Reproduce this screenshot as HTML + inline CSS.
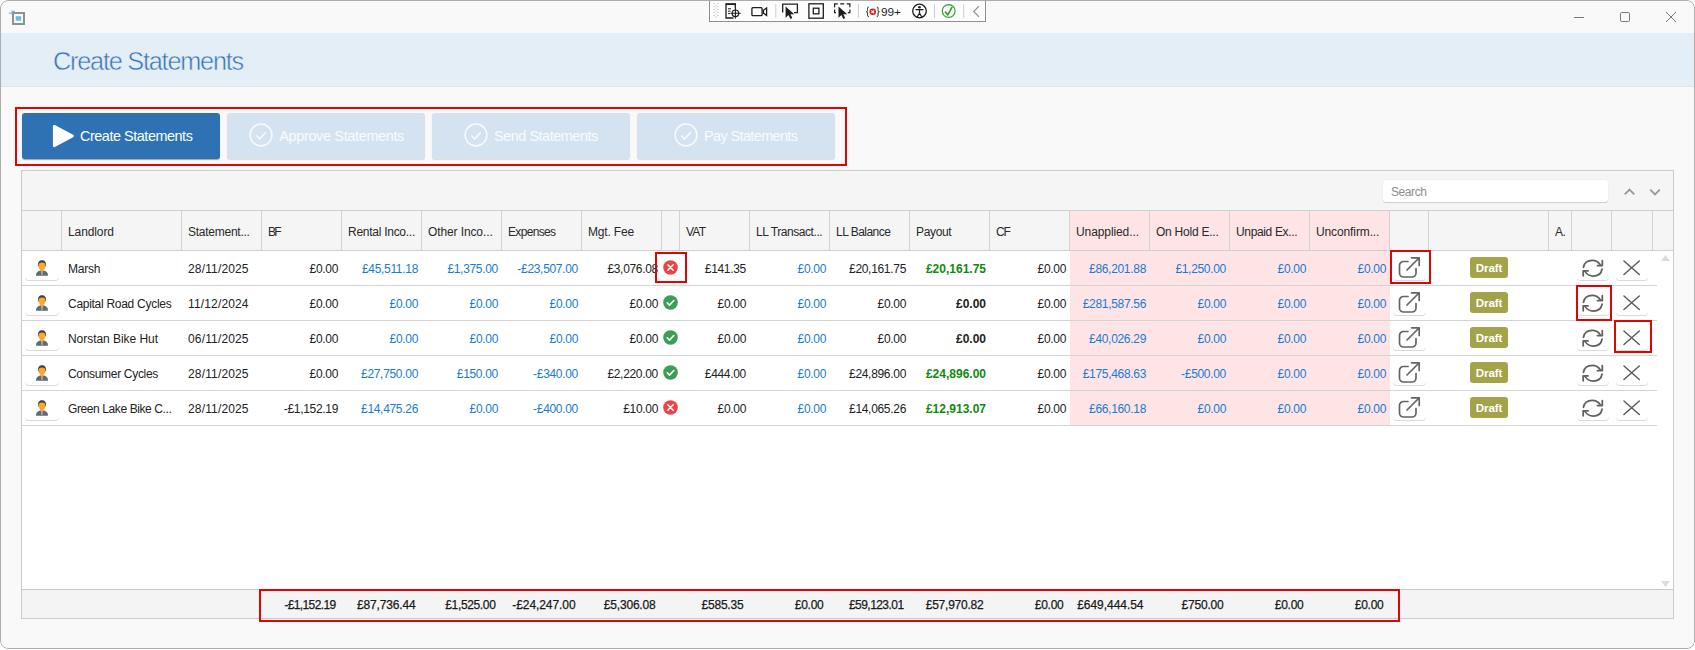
<!DOCTYPE html>
<html lang="en"><head><meta charset="utf-8"><title>Create Statements</title>
<style>
*{box-sizing:border-box;margin:0;padding:0}
html,body{width:1695px;height:650px;overflow:hidden;background:#fff}
body{font-family:"Liberation Sans",sans-serif;font-size:12px;color:#222;position:relative}
.a,svg{position:absolute}
svg{overflow:visible}
.win{position:absolute;left:0;top:0;width:1695px;height:649px;background:#f9f9f9;border-radius:8px;overflow:hidden}
.winb{left:0;top:0;width:1695px;height:649px;border:1px solid #adadad;border-radius:8px}
.band{left:0;top:33px;width:1695px;height:54px;background:#e4eef7;border-bottom:1px solid #dfe4e9}
.title{left:53px;top:45px;font-size:25.300px;line-height:32px;color:#3876b5;white-space:nowrap;-webkit-text-stroke:0.500px #e4eef7}
.btn{position:absolute;top:113px;height:46px;width:198px;border-radius:3px;background:#d5e3f0;box-shadow:0 1px 1px rgba(0,0,0,.12);color:#f8fbfe;font-size:14.400px;line-height:46px;white-space:nowrap}
.btn.on{background:#2e72b4;color:#fff;box-shadow:0 1px 1px rgba(0,0,0,.35)}
.btn span{position:absolute;top:0}
.red{position:absolute;border:2px solid #e00505}
.grid{position:absolute;left:21px;top:170px;width:1653px;height:449px;border:1px solid #cbcbcb;background:#fff}
.gtop{left:0;top:0;width:1651px;height:39px;background:#f5f5f5}
.ghead{left:0;top:39px;width:1651px;height:41px;background:#f5f5f5;border-top:1px solid #cfcfcf;border-bottom:1px solid #cfcfcf}
.gfoot{left:0;top:418px;width:1651px;height:29px;background:#f4f4f4;border-top:1px solid #c9c9c9}
.vs{position:absolute;top:0;width:1px;height:39px;background:#d2d2d2}
.ht{position:absolute;top:0;height:39px;line-height:43px;white-space:nowrap;color:#2a2a2a}
.row{position:absolute;left:0;width:1635px;height:35px;border-bottom:1px solid #d4d4d4}
.c{position:absolute;top:0;height:34px;line-height:37px;white-space:nowrap;overflow:hidden}
.r{text-align:right;letter-spacing:-0.310px}
.b{color:#177bd1}
.pk{background:#ffe4e6}
.pay{font-weight:bold;letter-spacing:0}
.g{color:#0f8a0f}
.ib{position:absolute;background:#fff;border-radius:4px;box-shadow:0 1px 0 #dadada}
.badge{position:absolute;width:38px;height:21px;border-radius:3px;background:#a3a34a;color:#fff;font-weight:bold;font-size:11.600px;line-height:21px;text-align:center;letter-spacing:-0.150px}
.ft{position:absolute;top:0;height:28px;line-height:31px;text-align:right;white-space:nowrap;color:#1a1a1a;-webkit-text-stroke:0.250px #1a1a1a}
</style></head><body>
<div class="win">

<svg style="left:10px;top:10px" width="16" height="16" viewBox="0 0 16 16"><rect x="1.400" y="0.700" width="3.400" height="4.100" fill="#5ec3e8"/><rect x="3" y="3" width="11" height="11" fill="#f9f9f9" stroke="#909090" stroke-width="2"/><rect x="5.700" y="6.200" width="5.500" height="4.500" fill="#5ec3e8"/><rect x="-0.800" y="2.500" width="1.500" height="1.300" fill="#909090"/></svg>
<svg style="left:1560px;top:0" width="133" height="33" viewBox="0 0 133 33" fill="none" stroke="#7a7a7a" stroke-width="1"><path d="M14 17.500h10"/><rect x="60.500" y="12.500" width="9" height="9" rx="1.200"/><path d="M106 12l10 10M116 12l-10 10"/></svg>
<div class="a" style="left:709px;top:-1px;width:277px;height:23px;background:#fdfdfd;border:1px solid #8f8f8f;"></div>
<svg style="left:700px;top:0" width="300" height="24" viewBox="0 0 300 24" fill="none" stroke="#1e1e1e" stroke-width="1.300">
<g fill="#b4b4b4" stroke="none"><path d="M13.500 3h1v1h-1zM15.500 4.500h1v1h-1zM13.500 6h1v1h-1zM15.500 7.500h1v1h-1zM13.500 9h1v1h-1zM15.500 10.500h1v1h-1zM13.500 12h1v1h-1zM15.500 13.500h1v1h-1zM13.500 15h1v1h-1zM15.500 16.500h1v1h-1zM17.500 3h1v1h-1zM17.500 6h1v1h-1zM17.500 9h1v1h-1zM17.500 12h1v1h-1zM17.500 15h1v1h-1z"/></g>
<g><path d="M25.300 4.100h10.700" stroke-width="1.900"/><path d="M26 5v13h7.500M35.300 5v3"/><path d="M28 8.800h3M28 11.200h2.500M28 13.600h2" stroke-width="1"/><circle cx="35.400" cy="13.300" r="3.300" stroke-width="1.200"/><path d="M35.400 8v10.600M30.400 13.300h10.300" stroke-width="1.100"/></g>
<g><rect x="51.900" y="7.700" width="10.200" height="8" rx="1"/><path d="M63.400 10.300l3.200-2.300v7.400l-3.200-2.300z"/></g>
<path d="M75.800 4.400v13.300M158.400 4.400v13.300M234.500 4.400v13.300M263.700 4.400v13.300" stroke="#c5cbd6" stroke-width="1"/>
<g><path d="M82.700 12.600v-8.500h14.700v8.500h-3.400"/><path d="M85.600 6.600v11.200l2.900-2.700 1.900 3.900 1.900-0.900-1.900-3.800h3.900z" fill="#1e1e1e" stroke="none"/></g>
<g><rect x="108.900" y="3.800" width="14.400" height="14.400"/><rect x="113.300" y="8.200" width="5.600" height="5.600"/></g>
<g><path d="M134.600 7.200v-3.300h3.200M140.200 3.900h4M146.700 3.900h3.200v3.300M149.900 9.500v3.200h-2M134.600 9.500v3.200h1.400" stroke-width="1.200"/><path d="M138.500 6.600v11.200l2.900-2.700 1.900 3.900 1.900-0.900-1.900-3.800h3.900z" fill="#1e1e1e" stroke="none"/></g>
<g stroke-width="1"><path d="M168.800 7c-1.300 0-1.300 0.900-1.300 2.400s0 2.400-1.200 2.400c1.200 0 1.200 0.900 1.200 2.400s0 2.400 1.300 2.400M176.800 7c1.300 0 1.300 0.900 1.300 2.400s0 2.400 1.200 2.400c-1.200 0-1.200 0.900-1.200 2.400s0 2.400-1.300 2.400"/><circle cx="172.700" cy="11.800" r="3.300" fill="#e01b1b" stroke="none"/><path d="M171.400 10.500l2.600 2.600M174 10.500l-2.600 2.600" stroke="#fff" stroke-width="1.100"/></g>
<g><circle cx="219.500" cy="11" r="6.800"/><circle cx="219.500" cy="7.200" r="1.300" fill="#1e1e1e" stroke="none"/><path d="M215.500 9.700h8M219.500 9.700v3.500M219.500 13l-2.300 4M219.500 13l2.300 4" stroke-width="1.200"/></g>
<g stroke="#2ca02c"><circle cx="248.700" cy="11" r="6.400" stroke-width="1.100"/><path d="M245 11.500l2.800 3.300 4.400-8" stroke-width="1.600"/></g>
<path d="M279 6.200l-5.300 5.300 5.300 5.300" stroke="#8e8e8e" stroke-width="1.200"/>
</svg>
<div class="a" style="left:881px;top:3px;font-size:11.800px;line-height:18px;color:#1e1e1e;white-space:nowrap"><span style="letter-spacing:-0.072px">99+</span></div>
<div class="a band"></div><div class="a title"><span style="letter-spacing:-1.231px">Create Statements</span></div>
<div class="red" style="left:15px;top:107px;width:832px;height:59px"></div>
<div class="btn on" style="left:22px"><svg style="left:30px;top:11px" width="23" height="24" viewBox="0 0 23 24"><path d="M2.200 2.200L20.500 12 2.200 21.800z" fill="#fff" stroke="#fff" stroke-width="2.600" stroke-linejoin="round"/></svg><span style="left:58px"><span style="letter-spacing:-0.446px">Create Statements</span></span></div>
<div class="btn" style="left:227px"><svg style="left:20.7px;top:9px" width="26" height="26" viewBox="0 0 26 26" fill="none" stroke="#f8fbfe" stroke-width="1.500"><circle cx="13" cy="13" r="10.900"/><path d="M8.300 13.500l3.300 3.300 6.200-6.600"/></svg><span style="left:52.3px"><span style="letter-spacing:-0.316px">Approve Statements</span></span></div>
<div class="btn" style="left:432px"><svg style="left:30.7px;top:9px" width="26" height="26" viewBox="0 0 26 26" fill="none" stroke="#f8fbfe" stroke-width="1.500"><circle cx="13" cy="13" r="10.900"/><path d="M8.300 13.500l3.300 3.300 6.200-6.600"/></svg><span style="left:62.0px"><span style="letter-spacing:-0.440px">Send Statements</span></span></div>
<div class="btn" style="left:637px"><svg style="left:35.9px;top:9px" width="26" height="26" viewBox="0 0 26 26" fill="none" stroke="#f8fbfe" stroke-width="1.500"><circle cx="13" cy="13" r="10.900"/><path d="M8.300 13.500l3.300 3.300 6.200-6.600"/></svg><span style="left:67.0px"><span style="letter-spacing:-0.585px">Pay Statements</span></span></div>
<div class="grid"><div class="a gtop">
<div class="a" style="left:1361px;top:9px;width:225px;height:22px;background:#fff;border-radius:3px;box-shadow:0 1px 0 #cdcdcd, 0 0 0 0.500px #ececec"></div><div class="a" style="left:1369px;top:9px;line-height:25px;color:#8e8e8e;font-size:12px;white-space:nowrap"><span style="letter-spacing:-0.422px">Search</span></div>
<svg style="left:1600px;top:15px" width="44" height="12" viewBox="0 0 44 12" fill="none" stroke="#9a9a9a" stroke-width="1.900"><path d="M2.700 8.300l4.800-4.800 4.800 4.800M28.200 3.700l4.800 4.800 4.800-4.800"/></svg>
</div><div class="a ghead">
<div class="vs" style="left:39px"></div>
<div class="vs" style="left:159px"></div>
<div class="ht" style="left:46px"><span style="letter-spacing:-0.102px">Landlord</span></div>
<div class="vs" style="left:239px"></div>
<div class="ht" style="left:166px"><span style="letter-spacing:-0.250px">Statement...</span></div>
<div class="vs" style="left:319px"></div>
<div class="ht" style="left:246px"><span style="letter-spacing:-1.672px">BF</span></div>
<div class="vs" style="left:399px"></div>
<div class="ht" style="left:326px"><span style="letter-spacing:-0.266px">Rental Inco...</span></div>
<div class="vs" style="left:479px"></div>
<div class="ht" style="left:406px"><span style="letter-spacing:-0.110px">Other Inco...</span></div>
<div class="vs" style="left:559px"></div>
<div class="ht" style="left:486px"><span style="letter-spacing:-0.663px">Expenses</span></div>
<div class="vs" style="left:639px"></div>
<div class="ht" style="left:566px"><span style="letter-spacing:-0.182px">Mgt. Fee</span></div>
<div class="vs" style="left:657px"></div>
<div class="vs" style="left:727px"></div>
<div class="ht" style="left:664px"><span style="letter-spacing:-0.754px">VAT</span></div>
<div class="vs" style="left:807px"></div>
<div class="ht" style="left:734px"><span style="letter-spacing:-0.433px">LL Transact...</span></div>
<div class="vs" style="left:887px"></div>
<div class="ht" style="left:814px"><span style="letter-spacing:-0.521px">LL Balance</span></div>
<div class="vs" style="left:967px"></div>
<div class="ht" style="left:894px"><span style="letter-spacing:-0.343px">Payout</span></div>
<div class="vs" style="left:1047px"></div>
<div class="ht" style="left:974px"><span style="letter-spacing:-1.100px">CF</span></div>
<div class="a pk" style="left:1048px;top:0;width:79px;height:39px"></div>
<div class="vs" style="left:1127px"></div>
<div class="ht" style="left:1054px"><span style="letter-spacing:-0.096px">Unapplied...</span></div>
<div class="a pk" style="left:1128px;top:0;width:79px;height:39px"></div>
<div class="vs" style="left:1207px"></div>
<div class="ht" style="left:1134px"><span style="letter-spacing:-0.240px">On Hold E...</span></div>
<div class="a pk" style="left:1208px;top:0;width:79px;height:39px"></div>
<div class="vs" style="left:1287px"></div>
<div class="ht" style="left:1214px"><span style="letter-spacing:-0.348px">Unpaid Ex...</span></div>
<div class="a pk" style="left:1288px;top:0;width:79px;height:39px"></div>
<div class="vs" style="left:1367px"></div>
<div class="ht" style="left:1294px"><span style="letter-spacing:-0.116px">Unconfirm...</span></div>
<div class="vs" style="left:1406px"></div>
<div class="vs" style="left:1526px"></div>
<div class="vs" style="left:1549px"></div>
<div class="ht" style="left:1533px"><span style="letter-spacing:-0.472px">A.</span></div>
<div class="vs" style="left:1589px"></div>
<div class="vs" style="left:1630px"></div>
</div>
<div class="row" style="top:80px">
<div class="ib" style="left:3px;top:3px;width:34px;height:26px"></div>
<svg style="left:14px;top:9px" width="13" height="16" viewBox="0 0 13 16"><path d="M0 15.700c0-3 1.500-4.500 4-5.100h4c2.500 0.600 4 2.100 4 5.100z" fill="#546e7a"/><path d="M4.900 10.700h2.200l-0.400 4.300h-1.400z" fill="#ef8a8a"/><path d="M2 6.300c-0.500-4.200 1.500-6.100 4-6.100s4.500 1.900 4 6.100z" fill="#37434b"/><path d="M2.500 5.200c0-1.600 1.200-2.600 3.500-2.600s3.500 1 3.500 2.600c0 1.800-0.700 3.400-1.700 4.300l-0.400 1.600h-2.800l-0.400-1.600c-1-0.900-1.700-2.500-1.700-4.300z" fill="#ffa726"/></svg>
<div class="c" style="left:40px;width:119px;padding-left:6px;"><span style="letter-spacing:-0.209px">Marsh</span></div>
<div class="c" style="left:160px;width:79px;padding-left:6px;"><span style="letter-spacing:0.153px">28/11/2025</span></div>
<div class="c r" style="left:240px;width:79px;padding-right:3px;">£0.00</div>
<div class="c r b" style="left:320px;width:79px;padding-right:3px;">£45,511.18</div>
<div class="c r b" style="left:400px;width:79px;padding-right:3px;">£1,375.00</div>
<div class="c r b" style="left:480px;width:79px;padding-right:3px;">-£23,507.00</div>
<div class="c r" style="left:560px;width:79px;padding-right:3px;">£3,076.08</div>
<svg style="left:641px;top:8.800px" width="15" height="15" viewBox="0 0 15 15"><circle cx="7.500" cy="7.500" r="7.300" fill="#e84548"/><path d="M4.800 4.800l5.400 5.400M10.200 4.800l-5.400 5.400" stroke="#fff" stroke-width="1.500" stroke-linecap="round"/></svg>
<div class="c r" style="left:658px;width:69px;padding-right:3px;">£141.35</div>
<div class="c r b" style="left:728px;width:79px;padding-right:3px;">£0.00</div>
<div class="c r" style="left:808px;width:79px;padding-right:3px;">£20,161.75</div>
<div class="c r pay g" style="left:888px;width:79px;padding-right:3px;">£20,161.75</div>
<div class="c r" style="left:968px;width:79px;padding-right:3px;">£0.00</div>
<div class="c pk r b" style="left:1048px;width:80px;padding-right:4px;">£86,201.88</div>
<div class="c pk r b" style="left:1127px;width:81px;padding-right:4px;">£1,250.00</div>
<div class="c pk r b" style="left:1207px;width:81px;padding-right:4px;">£0.00</div>
<div class="c pk r b" style="left:1287px;width:81px;padding-right:4px;">£0.00</div>
<div class="ib" style="left:1371px;top:3px;width:33px;height:26px"></div>
<svg style="left:1375px;top:5.300px" width="25" height="23" viewBox="0 0 25 23" fill="none" stroke="#646464" stroke-width="1.700" stroke-linecap="round" stroke-linejoin="round"><path d="M11 5.500H6.500a4 4 0 0 0-4 4V17a4 4 0 0 0 4 4H15a4 4 0 0 0 4-4v-4.500"/><path d="M10 14L22 2M14.500 1.800H22.200V9.500"/></svg>
<div class="badge" style="left:1448px;top:6px">Draft</div>
<div class="ib" style="left:1555px;top:3px;width:32px;height:26px"></div>
<svg style="left:1559px;top:6.500px" width="23.500" height="20.500" viewBox="0 0 24 21" fill="none" stroke="#606060" stroke-width="1.800" stroke-linecap="round" stroke-linejoin="round"><path d="M2.500 9.500c0.800-4.500 4.500-7 9-7 3.500 0 6.500 1.800 8.500 4.800"/><path d="M21.800 2.800v5h-5"/><path d="M21.500 11.500c-0.800 4.500-4.500 7-9 7-3.500 0-6.500-1.800-8.500-4.800"/><path d="M2.200 18.200v-5h5"/></svg>
<div class="ib" style="left:1594px;top:3px;width:32px;height:26px"></div>
<svg style="left:1601px;top:8.700px" width="17.300" height="15.400" viewBox="0 0 18 16" fill="none" stroke="#5a5a5a" stroke-width="1.500" stroke-linecap="round"><path d="M1 1l16 14M17 1L1 15"/></svg>
</div>
<div class="row" style="top:115px">
<div class="ib" style="left:3px;top:3px;width:34px;height:26px"></div>
<svg style="left:14px;top:9px" width="13" height="16" viewBox="0 0 13 16"><path d="M0 15.700c0-3 1.500-4.500 4-5.100h4c2.500 0.600 4 2.100 4 5.100z" fill="#546e7a"/><path d="M4.900 10.700h2.200l-0.400 4.300h-1.400z" fill="#ef8a8a"/><path d="M2 6.300c-0.500-4.200 1.500-6.100 4-6.100s4.500 1.900 4 6.100z" fill="#37434b"/><path d="M2.500 5.200c0-1.600 1.200-2.600 3.500-2.600s3.500 1 3.500 2.600c0 1.800-0.700 3.400-1.700 4.300l-0.400 1.600h-2.800l-0.400-1.600c-1-0.900-1.700-2.500-1.700-4.300z" fill="#ffa726"/></svg>
<div class="c" style="left:40px;width:119px;padding-left:6px;"><span style="letter-spacing:-0.280px">Capital Road Cycles</span></div>
<div class="c" style="left:160px;width:79px;padding-left:6px;"><span style="letter-spacing:0.153px">11/12/2024</span></div>
<div class="c r" style="left:240px;width:79px;padding-right:3px;">£0.00</div>
<div class="c r b" style="left:320px;width:79px;padding-right:3px;">£0.00</div>
<div class="c r b" style="left:400px;width:79px;padding-right:3px;">£0.00</div>
<div class="c r b" style="left:480px;width:79px;padding-right:3px;">£0.00</div>
<div class="c r" style="left:560px;width:79px;padding-right:3px;">£0.00</div>
<svg style="left:641px;top:8.800px" width="15" height="15" viewBox="0 0 15 15"><circle cx="7.500" cy="7.500" r="7.300" fill="#3d9d56"/><path d="M4.200 7.800l2.300 2.300 4.300-4.600" stroke="#fff" stroke-width="1.600" fill="none" stroke-linecap="round" stroke-linejoin="round"/></svg>
<div class="c r" style="left:658px;width:69px;padding-right:3px;">£0.00</div>
<div class="c r b" style="left:728px;width:79px;padding-right:3px;">£0.00</div>
<div class="c r" style="left:808px;width:79px;padding-right:3px;">£0.00</div>
<div class="c r pay" style="left:888px;width:79px;padding-right:3px;">£0.00</div>
<div class="c r" style="left:968px;width:79px;padding-right:3px;">£0.00</div>
<div class="c pk r b" style="left:1048px;width:80px;padding-right:4px;">£281,587.56</div>
<div class="c pk r b" style="left:1127px;width:81px;padding-right:4px;">£0.00</div>
<div class="c pk r b" style="left:1207px;width:81px;padding-right:4px;">£0.00</div>
<div class="c pk r b" style="left:1287px;width:81px;padding-right:4px;">£0.00</div>
<div class="ib" style="left:1371px;top:3px;width:33px;height:26px"></div>
<svg style="left:1375px;top:5.300px" width="25" height="23" viewBox="0 0 25 23" fill="none" stroke="#646464" stroke-width="1.700" stroke-linecap="round" stroke-linejoin="round"><path d="M11 5.500H6.500a4 4 0 0 0-4 4V17a4 4 0 0 0 4 4H15a4 4 0 0 0 4-4v-4.500"/><path d="M10 14L22 2M14.500 1.800H22.200V9.500"/></svg>
<div class="badge" style="left:1448px;top:6px">Draft</div>
<div class="ib" style="left:1555px;top:3px;width:32px;height:26px"></div>
<svg style="left:1559px;top:6.500px" width="23.500" height="20.500" viewBox="0 0 24 21" fill="none" stroke="#606060" stroke-width="1.800" stroke-linecap="round" stroke-linejoin="round"><path d="M2.500 9.500c0.800-4.500 4.500-7 9-7 3.500 0 6.500 1.800 8.500 4.800"/><path d="M21.800 2.800v5h-5"/><path d="M21.500 11.500c-0.800 4.500-4.500 7-9 7-3.500 0-6.500-1.800-8.500-4.800"/><path d="M2.200 18.200v-5h5"/></svg>
<div class="ib" style="left:1594px;top:3px;width:32px;height:26px"></div>
<svg style="left:1601px;top:8.700px" width="17.300" height="15.400" viewBox="0 0 18 16" fill="none" stroke="#5a5a5a" stroke-width="1.500" stroke-linecap="round"><path d="M1 1l16 14M17 1L1 15"/></svg>
</div>
<div class="row" style="top:150px">
<div class="ib" style="left:3px;top:3px;width:34px;height:26px"></div>
<svg style="left:14px;top:9px" width="13" height="16" viewBox="0 0 13 16"><path d="M0 15.700c0-3 1.500-4.500 4-5.100h4c2.500 0.600 4 2.100 4 5.100z" fill="#546e7a"/><path d="M4.900 10.700h2.200l-0.400 4.300h-1.400z" fill="#ef8a8a"/><path d="M2 6.300c-0.500-4.200 1.500-6.100 4-6.100s4.500 1.900 4 6.100z" fill="#37434b"/><path d="M2.500 5.200c0-1.600 1.200-2.600 3.500-2.600s3.500 1 3.500 2.600c0 1.800-0.700 3.400-1.700 4.300l-0.400 1.600h-2.800l-0.400-1.600c-1-0.900-1.700-2.500-1.700-4.300z" fill="#ffa726"/></svg>
<div class="c" style="left:40px;width:119px;padding-left:6px;"><span style="letter-spacing:-0.044px">Norstan Bike Hut</span></div>
<div class="c" style="left:160px;width:79px;padding-left:6px;"><span style="letter-spacing:0.153px">06/11/2025</span></div>
<div class="c r" style="left:240px;width:79px;padding-right:3px;">£0.00</div>
<div class="c r b" style="left:320px;width:79px;padding-right:3px;">£0.00</div>
<div class="c r b" style="left:400px;width:79px;padding-right:3px;">£0.00</div>
<div class="c r b" style="left:480px;width:79px;padding-right:3px;">£0.00</div>
<div class="c r" style="left:560px;width:79px;padding-right:3px;">£0.00</div>
<svg style="left:641px;top:8.800px" width="15" height="15" viewBox="0 0 15 15"><circle cx="7.500" cy="7.500" r="7.300" fill="#3d9d56"/><path d="M4.200 7.800l2.300 2.300 4.300-4.600" stroke="#fff" stroke-width="1.600" fill="none" stroke-linecap="round" stroke-linejoin="round"/></svg>
<div class="c r" style="left:658px;width:69px;padding-right:3px;">£0.00</div>
<div class="c r b" style="left:728px;width:79px;padding-right:3px;">£0.00</div>
<div class="c r" style="left:808px;width:79px;padding-right:3px;">£0.00</div>
<div class="c r pay" style="left:888px;width:79px;padding-right:3px;">£0.00</div>
<div class="c r" style="left:968px;width:79px;padding-right:3px;">£0.00</div>
<div class="c pk r b" style="left:1048px;width:80px;padding-right:4px;">£40,026.29</div>
<div class="c pk r b" style="left:1127px;width:81px;padding-right:4px;">£0.00</div>
<div class="c pk r b" style="left:1207px;width:81px;padding-right:4px;">£0.00</div>
<div class="c pk r b" style="left:1287px;width:81px;padding-right:4px;">£0.00</div>
<div class="ib" style="left:1371px;top:3px;width:33px;height:26px"></div>
<svg style="left:1375px;top:5.300px" width="25" height="23" viewBox="0 0 25 23" fill="none" stroke="#646464" stroke-width="1.700" stroke-linecap="round" stroke-linejoin="round"><path d="M11 5.500H6.500a4 4 0 0 0-4 4V17a4 4 0 0 0 4 4H15a4 4 0 0 0 4-4v-4.500"/><path d="M10 14L22 2M14.500 1.800H22.200V9.500"/></svg>
<div class="badge" style="left:1448px;top:6px">Draft</div>
<div class="ib" style="left:1555px;top:3px;width:32px;height:26px"></div>
<svg style="left:1559px;top:6.500px" width="23.500" height="20.500" viewBox="0 0 24 21" fill="none" stroke="#606060" stroke-width="1.800" stroke-linecap="round" stroke-linejoin="round"><path d="M2.500 9.500c0.800-4.500 4.500-7 9-7 3.500 0 6.500 1.800 8.500 4.800"/><path d="M21.800 2.800v5h-5"/><path d="M21.500 11.500c-0.800 4.500-4.500 7-9 7-3.500 0-6.500-1.800-8.500-4.800"/><path d="M2.200 18.200v-5h5"/></svg>
<div class="ib" style="left:1594px;top:3px;width:32px;height:26px"></div>
<svg style="left:1601px;top:8.700px" width="17.300" height="15.400" viewBox="0 0 18 16" fill="none" stroke="#5a5a5a" stroke-width="1.500" stroke-linecap="round"><path d="M1 1l16 14M17 1L1 15"/></svg>
</div>
<div class="row" style="top:185px">
<div class="ib" style="left:3px;top:3px;width:34px;height:26px"></div>
<svg style="left:14px;top:9px" width="13" height="16" viewBox="0 0 13 16"><path d="M0 15.700c0-3 1.500-4.500 4-5.100h4c2.500 0.600 4 2.100 4 5.100z" fill="#546e7a"/><path d="M4.900 10.700h2.200l-0.400 4.300h-1.400z" fill="#ef8a8a"/><path d="M2 6.300c-0.500-4.200 1.500-6.100 4-6.100s4.500 1.900 4 6.100z" fill="#37434b"/><path d="M2.500 5.200c0-1.600 1.200-2.600 3.500-2.600s3.500 1 3.500 2.600c0 1.800-0.700 3.400-1.700 4.300l-0.400 1.600h-2.800l-0.400-1.600c-1-0.900-1.700-2.500-1.700-4.300z" fill="#ffa726"/></svg>
<div class="c" style="left:40px;width:119px;padding-left:6px;"><span style="letter-spacing:-0.314px">Consumer Cycles</span></div>
<div class="c" style="left:160px;width:79px;padding-left:6px;"><span style="letter-spacing:0.153px">28/11/2025</span></div>
<div class="c r" style="left:240px;width:79px;padding-right:3px;">£0.00</div>
<div class="c r b" style="left:320px;width:79px;padding-right:3px;">£27,750.00</div>
<div class="c r b" style="left:400px;width:79px;padding-right:3px;">£150.00</div>
<div class="c r b" style="left:480px;width:79px;padding-right:3px;">-£340.00</div>
<div class="c r" style="left:560px;width:79px;padding-right:3px;">£2,220.00</div>
<svg style="left:641px;top:8.800px" width="15" height="15" viewBox="0 0 15 15"><circle cx="7.500" cy="7.500" r="7.300" fill="#3d9d56"/><path d="M4.200 7.800l2.300 2.300 4.300-4.600" stroke="#fff" stroke-width="1.600" fill="none" stroke-linecap="round" stroke-linejoin="round"/></svg>
<div class="c r" style="left:658px;width:69px;padding-right:3px;">£444.00</div>
<div class="c r b" style="left:728px;width:79px;padding-right:3px;">£0.00</div>
<div class="c r" style="left:808px;width:79px;padding-right:3px;">£24,896.00</div>
<div class="c r pay g" style="left:888px;width:79px;padding-right:3px;">£24,896.00</div>
<div class="c r" style="left:968px;width:79px;padding-right:3px;">£0.00</div>
<div class="c pk r b" style="left:1048px;width:80px;padding-right:4px;">£175,468.63</div>
<div class="c pk r b" style="left:1127px;width:81px;padding-right:4px;">-£500.00</div>
<div class="c pk r b" style="left:1207px;width:81px;padding-right:4px;">£0.00</div>
<div class="c pk r b" style="left:1287px;width:81px;padding-right:4px;">£0.00</div>
<div class="ib" style="left:1371px;top:3px;width:33px;height:26px"></div>
<svg style="left:1375px;top:5.300px" width="25" height="23" viewBox="0 0 25 23" fill="none" stroke="#646464" stroke-width="1.700" stroke-linecap="round" stroke-linejoin="round"><path d="M11 5.500H6.500a4 4 0 0 0-4 4V17a4 4 0 0 0 4 4H15a4 4 0 0 0 4-4v-4.500"/><path d="M10 14L22 2M14.500 1.800H22.200V9.500"/></svg>
<div class="badge" style="left:1448px;top:6px">Draft</div>
<div class="ib" style="left:1555px;top:3px;width:32px;height:26px"></div>
<svg style="left:1559px;top:6.500px" width="23.500" height="20.500" viewBox="0 0 24 21" fill="none" stroke="#606060" stroke-width="1.800" stroke-linecap="round" stroke-linejoin="round"><path d="M2.500 9.500c0.800-4.500 4.500-7 9-7 3.500 0 6.500 1.800 8.500 4.800"/><path d="M21.800 2.800v5h-5"/><path d="M21.500 11.500c-0.800 4.500-4.500 7-9 7-3.500 0-6.500-1.800-8.500-4.800"/><path d="M2.200 18.200v-5h5"/></svg>
<div class="ib" style="left:1594px;top:3px;width:32px;height:26px"></div>
<svg style="left:1601px;top:8.700px" width="17.300" height="15.400" viewBox="0 0 18 16" fill="none" stroke="#5a5a5a" stroke-width="1.500" stroke-linecap="round"><path d="M1 1l16 14M17 1L1 15"/></svg>
</div>
<div class="row" style="top:220px">
<div class="ib" style="left:3px;top:3px;width:34px;height:26px"></div>
<svg style="left:14px;top:9px" width="13" height="16" viewBox="0 0 13 16"><path d="M0 15.700c0-3 1.500-4.500 4-5.100h4c2.500 0.600 4 2.100 4 5.100z" fill="#546e7a"/><path d="M4.900 10.700h2.200l-0.400 4.300h-1.400z" fill="#ef8a8a"/><path d="M2 6.300c-0.500-4.200 1.500-6.100 4-6.100s4.500 1.900 4 6.100z" fill="#37434b"/><path d="M2.500 5.200c0-1.600 1.200-2.600 3.500-2.600s3.500 1 3.500 2.600c0 1.800-0.700 3.400-1.700 4.300l-0.400 1.600h-2.800l-0.400-1.600c-1-0.900-1.700-2.500-1.700-4.300z" fill="#ffa726"/></svg>
<div class="c" style="left:40px;width:119px;padding-left:6px;"><span style="letter-spacing:-0.400px">Green Lake Bike C...</span></div>
<div class="c" style="left:160px;width:79px;padding-left:6px;"><span style="letter-spacing:0.153px">28/11/2025</span></div>
<div class="c r" style="left:240px;width:79px;padding-right:3px;">-£1,152.19</div>
<div class="c r b" style="left:320px;width:79px;padding-right:3px;">£14,475.26</div>
<div class="c r b" style="left:400px;width:79px;padding-right:3px;">£0.00</div>
<div class="c r b" style="left:480px;width:79px;padding-right:3px;">-£400.00</div>
<div class="c r" style="left:560px;width:79px;padding-right:3px;">£10.00</div>
<svg style="left:641px;top:8.800px" width="15" height="15" viewBox="0 0 15 15"><circle cx="7.500" cy="7.500" r="7.300" fill="#e84548"/><path d="M4.800 4.800l5.400 5.400M10.200 4.800l-5.400 5.400" stroke="#fff" stroke-width="1.500" stroke-linecap="round"/></svg>
<div class="c r" style="left:658px;width:69px;padding-right:3px;">£0.00</div>
<div class="c r b" style="left:728px;width:79px;padding-right:3px;">£0.00</div>
<div class="c r" style="left:808px;width:79px;padding-right:3px;">£14,065.26</div>
<div class="c r pay g" style="left:888px;width:79px;padding-right:3px;">£12,913.07</div>
<div class="c r" style="left:968px;width:79px;padding-right:3px;">£0.00</div>
<div class="c pk r b" style="left:1048px;width:80px;padding-right:4px;">£66,160.18</div>
<div class="c pk r b" style="left:1127px;width:81px;padding-right:4px;">£0.00</div>
<div class="c pk r b" style="left:1207px;width:81px;padding-right:4px;">£0.00</div>
<div class="c pk r b" style="left:1287px;width:81px;padding-right:4px;">£0.00</div>
<div class="ib" style="left:1371px;top:3px;width:33px;height:26px"></div>
<svg style="left:1375px;top:5.300px" width="25" height="23" viewBox="0 0 25 23" fill="none" stroke="#646464" stroke-width="1.700" stroke-linecap="round" stroke-linejoin="round"><path d="M11 5.500H6.500a4 4 0 0 0-4 4V17a4 4 0 0 0 4 4H15a4 4 0 0 0 4-4v-4.500"/><path d="M10 14L22 2M14.500 1.800H22.200V9.500"/></svg>
<div class="badge" style="left:1448px;top:6px">Draft</div>
<div class="ib" style="left:1555px;top:3px;width:32px;height:26px"></div>
<svg style="left:1559px;top:6.500px" width="23.500" height="20.500" viewBox="0 0 24 21" fill="none" stroke="#606060" stroke-width="1.800" stroke-linecap="round" stroke-linejoin="round"><path d="M2.500 9.500c0.800-4.500 4.500-7 9-7 3.500 0 6.500 1.800 8.500 4.800"/><path d="M21.800 2.800v5h-5"/><path d="M21.500 11.500c-0.800 4.500-4.500 7-9 7-3.500 0-6.500-1.800-8.500-4.800"/><path d="M2.200 18.200v-5h5"/></svg>
<div class="ib" style="left:1594px;top:3px;width:32px;height:26px"></div>
<svg style="left:1601px;top:8.700px" width="17.300" height="15.400" viewBox="0 0 18 16" fill="none" stroke="#5a5a5a" stroke-width="1.500" stroke-linecap="round"><path d="M1 1l16 14M17 1L1 15"/></svg>
</div>
<svg style="left:1639px;top:84px" width="9" height="6" viewBox="0 0 9 6"><path d="M0 6L4.500 0 9 6z" fill="#dcdcdc"/></svg>
<svg style="left:1639px;top:410px" width="9" height="6" viewBox="0 0 9 6"><path d="M0 0L4.500 6 9 0z" fill="#dcdcdc"/></svg>
<div class="a gfoot">
<div class="ft" style="left:220px;width:93.5px"><span style="letter-spacing:-0.629px">-£1,152.19</span></div>
<div class="ft" style="left:300px;width:93.5px"><span style="letter-spacing:-0.146px">£87,736.44</span></div>
<div class="ft" style="left:380px;width:93.5px"><span style="letter-spacing:-0.355px">£1,525.00</span></div>
<div class="ft" style="left:460px;width:93.5px"><span style="letter-spacing:-0.078px">-£24,247.00</span></div>
<div class="ft" style="left:540px;width:93.5px"><span style="letter-spacing:-0.188px">£5,306.08</span></div>
<div class="ft" style="left:638px;width:83.5px"><span style="letter-spacing:-0.184px">£585.35</span></div>
<div class="ft" style="left:708px;width:93.5px"><span style="letter-spacing:-0.266px">£0.00</span></div>
<div class="ft" style="left:788px;width:93.5px"><span style="letter-spacing:-0.556px">£59,123.01</span></div>
<div class="ft" style="left:868px;width:93.5px"><span style="letter-spacing:-0.226px">£57,970.82</span></div>
<div class="ft" style="left:948px;width:93.5px"><span style="letter-spacing:-0.266px">£0.00</span></div>
<div class="ft" style="left:1028px;width:93.5px"><span style="letter-spacing:-0.039px">£649,444.54</span></div>
<div class="ft" style="left:1108px;width:93.5px"><span style="letter-spacing:-0.213px">£750.00</span></div>
<div class="ft" style="left:1188px;width:93.5px"><span style="letter-spacing:-0.266px">£0.00</span></div>
<div class="ft" style="left:1268px;width:93.5px"><span style="letter-spacing:-0.266px">£0.00</span></div>
</div></div>
<div class="red" style="left:655px;top:252px;width:32px;height:31px"></div>
<div class="red" style="left:1390px;top:250px;width:41px;height:34px"></div>
<div class="red" style="left:1576px;top:285px;width:36px;height:36px"></div>
<div class="red" style="left:1614px;top:320px;width:38px;height:33px"></div>
<div class="red" style="left:259px;top:589px;width:1141px;height:33px"></div>
<div class="a winb"></div></div></body></html>
